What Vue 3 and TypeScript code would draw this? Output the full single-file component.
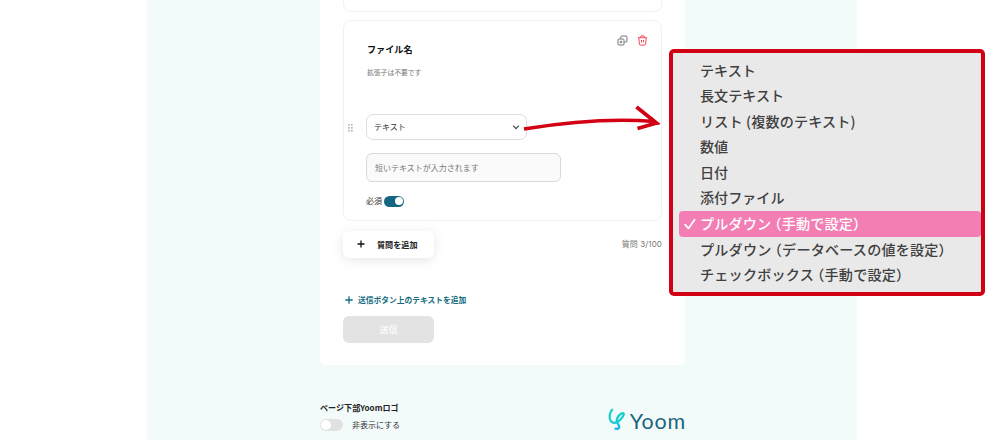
<script setup lang="ts">
import {ref} from "vue";

interface MenuItem {
  label: string;
  spacing?: number;  // 字間の微調整 (px)
}

const menuItems: MenuItem[] = [
  {label: "テキスト"},
  {label: "長文テキスト"},
  {label: "リスト (複数のテキスト)", spacing: 0.15},
  {label: "数値"},
  {label: "日付"},
  {label: "添付ファイル"},
  {label: "プルダウン （手動で設定）", spacing: 0.15},
  {label: "プルダウン （データベースの値を設定）", spacing: 0.2},
  {label: "チェックボックス （手動で設定）", spacing: 0.2},
];
const selected = ref(6);
const required = ref(true);
const logoHidden = ref(false);
</script>


<template>
  <div class="page">
    <div class="canvas">
      <main class="form">
        <section class="card previous"></section>
        <section class="card question">
          <div class="actions">
            <svg width="11" height="11" viewBox="0 0 11 11" fill="none" stroke="#666" stroke-width="0.9">
              <rect x="1" y="4" width="6" height="6" rx="1"/>
              <path d="M3.8 3.5V1.8q0-.8.8-.8H9q.9 0 .9.9v4.2q0 .9-.9.9H7.5M2.7 7h2.6M4 5.7v2.6"/>
            </svg>
            <svg width="11" height="11" viewBox="0 0 11 11" fill="none" stroke="#f5475b" stroke-width="1">
              <path d="M.9 2.7h9.2M3.5 2.5l.5-1.6h3l.5 1.6M1.8 2.9l.6 6.2q.1 1 1.1 1h4q1 0 1.1-1l.6-6.2M4.5 5v2.4M6.5 5v2.4"/>
            </svg>
          </div>
          <h2>ファイル名</h2>
          <p class="description">拡張子は不要です</p>
          <div class="selectRow">
            <svg class="grip" width="5" height="8" viewBox="0 0 5 8" fill="#777">
              <path d="M.3.3h1.2v1.2H.3zM3.3.3h1.2v1.2H3.3zM.3 3.3h1.2v1.2H.3zM3.3 3.3h1.2v1.2H3.3zM.3 6.3h1.2v1.2H.3zM3.3 6.3h1.2v1.2H3.3z"/>
            </svg>
            <div class="select">
              <span>テキスト</span>
              <svg width="8" height="6" viewBox="0 0 8 6" fill="none" stroke="#444" stroke-width="1.2">
                <path d="M1.2 1.6L4 4.6l2.8-3"/>
              </svg>
            </div>
          </div>
          <div class="answer">短いテキストが入力されます</div>
          <div class="requiredRow">
            <span>必須</span>
            <span class="switch small" :class="{on: required}" @click="required = !required"></span>
          </div>
        </section>
        <div class="addRow">
          <button class="addQuestion">
            <svg width="8" height="8" viewBox="0 0 8 8" stroke="#111" stroke-width="1.3">
              <path d="M4 .5v7M.5 4h7"/>
            </svg>
            <span>質問を追加</span>
          </button>
          <span class="count">質問 3/100</span>
        </div>
        <div class="addText">
          <svg width="8" height="8" viewBox="0 0 8 8" stroke="#146b80" stroke-width="1.3">
            <path d="M4 .3v7.4M.3 4h7.4"/>
          </svg>
          <span>送信ボタン上のテキストを追加</span>
        </div>
        <button class="submit">送信</button>
      </main>
      <footer>
        <div>
          <div class="footerTitle">ページ下部Yoomロゴ</div>
          <div class="footerToggle">
            <span class="switch" :class="{on: logoHidden}" @click="logoHidden = !logoHidden"></span>
            <span>非表示にする</span>
          </div>
        </div>
        <div class="logo">
          <svg width="18" height="23" viewBox="0 0 18 23" fill="none">
            <defs>
              <linearGradient id="logoGradient" x1="6" y1="0" x2="10" y2="23" gradientUnits="userSpaceOnUse">
                <stop offset="0" stop-color="#16d5bd"/>
                <stop offset="0.6" stop-color="#18cbd5"/>
                <stop offset="1" stop-color="#18a8f8"/>
              </linearGradient>
            </defs>
            <path d="M4.1 1.8C1.6 3.8.6 10.5 3 13.3C5.4 16 9.3 14.7 12 12C15.3 8.8 16.7 5.3 15 5.1C12.5 4.7 8.7 9.4 8.7 12.8C8.7 15.6 11.4 16.4 11.2 18.8C11 20.7 9 21.2 7.6 20.6"
                  stroke="url(#logoGradient)" stroke-width="2.3" stroke-linecap="round" stroke-linejoin="round"/>
          </svg>
          <span>Yoom</span>
        </div>
      </footer>
    </div>

    <svg class="arrow" width="142" height="32" viewBox="0 0 142 32" fill="none" stroke="#d20014" stroke-width="3.7">
      <path d="M2 26Q76 14 132 18.5M114.5 4l20 16-19 5.5"/>
      <path d="M130 14.5l8 7-9 1z" fill="#d20014" stroke="none"/>
    </svg>

    <div class="menu">
      <div
          v-for="(item, index) in menuItems"
          :key="item.label"
          class="menuItem"
          :class="{selected: index === selected}"
          :style="{letterSpacing: `${item.spacing ?? 0}px`}"
          @click="selected = index"
      >
        <svg class="check" width="12" height="12" viewBox="0 0 12 12" fill="none" stroke="#fff" stroke-width="1.8">
          <path v-if="index === selected" d="M1.2 6.7l3.2 3.7L10.6 1.7" stroke-linecap="round" stroke-linejoin="round"/>
        </svg>
        <span>{{ item.label }}</span>
      </div>
    </div>
  </div>
</template>


<style>
body {
  background: #fff;
  overflow: hidden;
}
</style>

<style scoped>
* {
  box-sizing: border-box;
}

.page {
  position: relative;
  width: 1000px;
  height: 440px;
  overflow: hidden;
  font-family: "Noto Sans CJK JP", sans-serif;
  font-size: 8px;
  line-height: 12px;
  color: #333;
}

.canvas {
  width: 710px;
  height: 440px;
  margin-left: 147px;
  padding: 0 172px 0 173px;
  background: #f2fafa;
}

.form {
  height: 365px;
  padding: 0 23px;
  background: #fff;
  border-radius: 0 0 6px 6px;
}

.card {
  border: 1.5px solid #f1f1f1;
  border-radius: 8px;
}

.previous {
  height: 11.5px;
  border-top: 0;
  border-radius: 0 0 8px 8px;
}

.question {
  position: relative;
  height: 201px;
  margin-top: 8.5px;
  padding: 21px 22px 0;
}

.actions {
  position: absolute;
  top: 14px;
  right: 13px;
  display: flex;
  gap: 9px;
}

h2 {
  margin: 0 0 0 1px;
  font-size: 9.1px;
  line-height: 14px;
  font-weight: 700;
  color: #111;
}

.description {
  margin: 11px 0 0 1px;
  font-size: 6.8px;
  line-height: 10px;
  color: #777;
}

.selectRow {
  display: flex;
  align-items: center;
  gap: 13px;
  margin: 37px 0 0 -18px;
}

.grip {
  margin-top: 2px;
}

.select {
  display: flex;
  align-items: center;
  justify-content: space-between;
  width: 160.5px;
  height: 26px;
  padding: 0 6px 0 7px;
  border: 1px solid #dedfe3;
  border-radius: 7px;
}

.answer {
  width: 195px;
  height: 29px;
  margin-top: 13px;
  padding: 7.5px 8px;
  border: 1px solid #d9d9d9;
  border-radius: 6px;
  background: #fafafa;
  color: #777;
}

.requiredRow {
  display: flex;
  align-items: center;
  gap: 2px;
  margin-top: 13px;
}

.switch {
  display: flex;
  align-items: center;
  width: 23px;
  height: 12px;
  padding: 1px;
  border-radius: 6px;
  background: #e1e1e1;
}

.switch::after {
  content: "";
  width: 10px;
  height: 10px;
  border-radius: 50%;
  background: #fff;
}

.switch.small {
  width: 20px;
  height: 11px;
}

.switch.small::after {
  width: 8px;
  height: 8px;
}

.switch.on {
  justify-content: flex-end;
  background: #146780;
}

.addRow {
  display: flex;
  justify-content: space-between;
  margin-top: 10px;
}

button {
  border: 0;
  font-family: inherit;
}

.addQuestion {
  display: flex;
  align-items: center;
  gap: 12px;
  width: 91px;
  height: 27px;
  padding: 0 14px 1px;
  border-radius: 6px;
  background: #fff;
  box-shadow: 0 2px 12px rgba(0, 0, 0, 0.1);
  font-size: 8.1px;
  font-weight: 700;
  color: #222;
  white-space: nowrap;
}

.count {
  margin-top: 7px;
  font-family: Inter, "Noto Sans CJK JP", sans-serif;
  font-size: 8px;
  letter-spacing: 0.1px;
  color: #777;
}

.addText {
  display: flex;
  align-items: center;
  gap: 5px;
  margin: 36px 0 0 2px;
  font-size: 7.75px;
  font-weight: 700;
  color: #146b80;
}

.submit {
  display: block;
  width: 91px;
  height: 27px;
  margin-top: 10px;
  padding: 0;
  border-radius: 6px;
  background: #e3e3e3;
  font-size: 9px;
  font-weight: 700;
  color: #fafafa;
}

footer {
  display: flex;
  justify-content: space-between;
  padding-top: 37px;
}

.footerTitle {
  font-size: 8.1px;
  font-weight: 700;
  color: #222;
  white-space: nowrap;
}

.footerToggle {
  display: flex;
  align-items: center;
  gap: 9px;
  margin-top: 5px;
}

.logo {
  display: flex;
  gap: 4px;
  margin: 6px -1px 0 0;
}

.logo span {
  margin-top: 1px;
  font-family: Lato, sans-serif;
  font-size: 21.5px;
  line-height: 24px;
  letter-spacing: 0.8px;
  color: #1b667c;
}

.arrow {
  position: absolute;
  left: 522px;
  top: 103px;
}

.menu {
  position: absolute;
  left: 669px;
  top: 49px;
  width: 316px;
  height: 247px;
  padding: 5px 0 0 6px;
  border: 4px solid #d20014;
  border-radius: 5px;
  background: #e9e9e9;
}

.menuItem {
  display: flex;
  align-items: center;
  height: 25.6px;
  padding-left: 4.5px;
  border-radius: 4px;
  font-size: 14.1px;
  font-weight: 500;
  line-height: 25.6px;
  font-feature-settings: "halt";
  white-space: pre;
  color: #404040;
}

.menuItem span {
  margin-top: -1px;
}

.menuItem.selected {
  position: relative;
  top: -0.5px;
  background: #f27eb3;
  color: #fff;
}

.check {
  margin-right: 4.5px;
}
</style>
